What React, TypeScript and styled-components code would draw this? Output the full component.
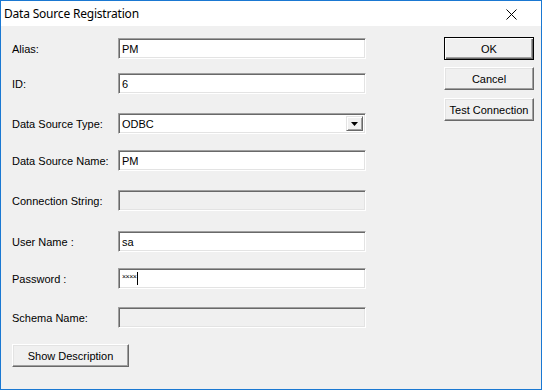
import React from "react";
import styled, { createGlobalStyle } from "styled-components";

const Global = createGlobalStyle`
  html, body { margin: 0; padding: 0; background: #f0f0f0; }
  * { box-sizing: border-box; }
`;

const Win = styled.div`
  width: 542px;
  height: 390px;
  border: 1px solid #1a78d2;
  background: #f0f0f0;
  display: flex;
  flex-direction: column;
  font-family: "Liberation Sans", Arial, sans-serif;
  font-size: 11px;
  color: #000;
`;

const TitleBar = styled.div`
  height: 25px;
  background: #fff;
  display: flex;
  align-items: center;
  padding-left: 3px;
  padding-right: 24px;
  justify-content: space-between;
`;

const TitleText = styled.span`
  font-family: "Noto Sans", "Segoe UI", sans-serif;
  font-size: 12px;
  letter-spacing: -0.2px;
  margin-top: -1px;
`;

const CloseIcon = styled.svg`
  width: 11px;
  height: 11px;
  margin-top: 2px;
`;

const Body = styled.div`
  flex: 1;
  display: flex;
  padding: 12px 7px 0 11px;
`;

const FormCol = styled.div`
  display: flex;
  flex-direction: column;
  width: 354px;
`;

const Row = styled.div<{ $gap: number }>`
  display: flex;
  align-items: center;
  height: 21px;
  margin-top: ${(p) => p.$gap}px;
`;

const Label = styled.span`
  width: 106px;
  white-space: nowrap;
`;

const Field = styled.div<{ $disabled?: boolean }>`
  width: 248px;
  height: 21px;
  background: ${(p) => (p.$disabled ? "#f0f0f0" : "#fff")};
  border-top: 1px solid #a0a0a0;
  border-left: 1px solid #a0a0a0;
  border-bottom: 1px solid #fff;
  border-right: 1px solid #fff;
  box-shadow: inset 1px 1px 0 #696969, inset -1px -1px 0 #e3e3e3;
  display: flex;
  align-items: center;
  padding-left: 3px;
  font-family: "Liberation Sans", Arial, sans-serif;
  font-size: 11px;
  position: relative;
`;

const Masked = styled.span`
  font-size: 7px;
  letter-spacing: -0.5px;
  margin-top: -5px;
`;

const Caret = styled.span`
  display: inline-block;
  width: 1px;
  height: 13px;
  background: #000;
  margin-left: 1px;
`;

const Arrow = styled.div`
  position: absolute;
  right: 2px;
  top: 2px;
  width: 17px;
  height: 15px;
  background: #f0f0f0;
  border-top: 1px solid #e3e3e3;
  border-left: 1px solid #e3e3e3;
  border-right: 1px solid #696969;
  border-bottom: 1px solid #696969;
  box-shadow: inset 1px 1px 0 #fff, inset -1px -1px 0 #a0a0a0;
  display: flex;
  align-items: center;
  justify-content: center;
`;

const BtnCol = styled.div`
  margin-left: auto;
  margin-top: -1px;
  display: flex;
  flex-direction: column;
`;

const Button = styled.div<{ $w: number; $gap?: number; $default?: boolean }>`
  width: ${(p) => p.$w}px;
  height: 23px;
  margin-top: ${(p) => p.$gap ?? 0}px;
  background: #f0f0f0;
  border: 1px solid ${(p) => (p.$default ? "#000" : "transparent")};
  border-top-color: ${(p) => (p.$default ? "#000" : "#fff")};
  border-left-color: ${(p) => (p.$default ? "#000" : "#fff")};
  border-right-color: ${(p) => (p.$default ? "#000" : "#696969")};
  border-bottom-color: ${(p) => (p.$default ? "#000" : "#696969")};
  box-shadow: ${(p) =>
    p.$default
      ? "inset 1px 1px 0 #fff, inset -1px -1px 0 #696969, inset -2px -2px 0 #a0a0a0"
      : "inset -1px -1px 0 #a0a0a0, inset 1px 1px 0 #e3e3e3"};
  display: flex;
  align-items: center;
  justify-content: center;
  font-family: "Liberation Sans", Arial, sans-serif;
  font-size: 11px;
`;

const Footer = styled.div`
  margin-top: 16px;
`;

type F = { label: string; value?: string; gap: number; disabled?: boolean; kind?: "combo" | "pwd" };

const fields: F[] = [
  { label: "Alias:", value: "PM", gap: 0 },
  { label: "ID:", value: "6", gap: 14 },
  { label: "Data Source Type:", value: "ODBC", gap: 19, kind: "combo" },
  { label: "Data Source Name:", value: "PM", gap: 16 },
  { label: "Connection String:", gap: 19, disabled: true },
  { label: "User Name :", value: "sa", gap: 20 },
  { label: "Password :", gap: 16, kind: "pwd" },
  { label: "Schema Name:", gap: 18, disabled: true },
];

export default function App() {
  return (
    <>
      <Global />
      <Win>
        <TitleBar>
          <TitleText>Data Source Registration</TitleText>
          <CloseIcon viewBox="0 0 11 11">
            <path d="M0.5 0.5 L10.5 10.5 M10.5 0.5 L0.5 10.5" stroke="#000" strokeWidth="1" fill="none" />
          </CloseIcon>
        </TitleBar>
        <Body>
          <FormCol>
            {fields.map((f) => (
              <Row key={f.label} $gap={f.gap}>
                <Label>{f.label}</Label>
                <Field $disabled={f.disabled}>
                  {f.kind === "pwd" ? (
                    <>
                      <Masked>××××</Masked>
                      <Caret />
                    </>
                  ) : (
                    f.value
                  )}
                  {f.kind === "combo" && (
                    <Arrow>
                      <svg width="7" height="4" viewBox="0 0 7 4">
                        <path d="M0 0 H7 L3.5 4 Z" fill="#000" />
                      </svg>
                    </Arrow>
                  )}
                </Field>
              </Row>
            ))}
            <Footer>
              <Button $w={117}>Show Description</Button>
            </Footer>
          </FormCol>
          <BtnCol>
            <Button $w={90} $default>
              OK
            </Button>
            <Button $w={90} $gap={7}>
              Cancel
            </Button>
            <Button $w={90} $gap={8}>
              Test Connection
            </Button>
          </BtnCol>
        </Body>
      </Win>
    </>
  );
}
